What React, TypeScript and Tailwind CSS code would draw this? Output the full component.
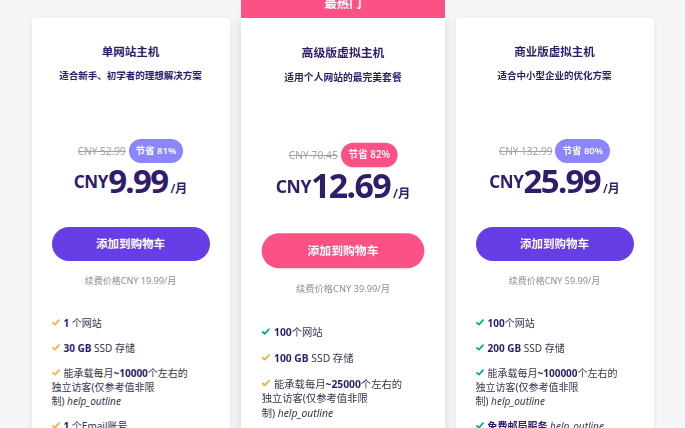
import React from "react";

type Feature = { green?: boolean; body: React.ReactNode };

const plans: {
  id: string;
  title: string;
  subtitle: string;
  oldPrice: string;
  save: string;
  price: string;
  renew: string;
  featured?: boolean;
  features: Feature[];
}[] = [
  {
    id: "single",
    title: "单网站主机",
    subtitle: "适合新手、初学者的理想解决方案",
    oldPrice: "CNY 52.99",
    save: "节省 81%",
    price: "9.99",
    renew: "续费价格CNY 19.99/月",
    features: [
      { body: <><b className="font-bold text-[#2f1c6a]">1</b> 个网站</> },
      { body: <><b className="font-bold text-[#2f1c6a]">30 GB</b> SSD 存储</> },
      {
        body: (
          <>
            能承载每月<b className="font-bold text-[#2f1c6a]">~10000</b>个左右的<br />
            独立访客(仅参考值非限<br />
            制) <i className="italic">help_outline</i>
          </>
        ),
      },
      { body: <><b className="font-bold text-[#2f1c6a]">1</b> 个Email账号</> },
      { body: <>免费SSL证书</> },
    ],
  },
  {
    id: "premium",
    title: "高级版虚拟主机",
    subtitle: "适用个人网站的最完美套餐",
    oldPrice: "CNY 70.45",
    save: "节省 82%",
    price: "12.69",
    renew: "续费价格CNY 39.99/月",
    featured: true,
    features: [
      { green: true, body: <><b className="font-bold text-[#2f1c6a]">100</b>个网站</> },
      { body: <><b className="font-bold text-[#2f1c6a]">100 GB</b> SSD 存储</> },
      {
        body: (
          <>
            能承载每月<b className="font-bold text-[#2f1c6a]">~25000</b>个左右的<br />
            独立访客(仅参考值非限<br />
            制) <i className="italic">help_outline</i>
          </>
        ),
      },
      { green: true, body: <><b className="font-bold text-[#2f1c6a]">免费邮局服务</b> <i className="italic">help_outline</i></> },
    ],
  },
  {
    id: "business",
    title: "商业版虚拟主机",
    subtitle: "适合中小型企业的优化方案",
    oldPrice: "CNY 132.99",
    save: "节省 80%",
    price: "25.99",
    renew: "续费价格CNY 59.99/月",
    features: [
      { green: true, body: <><b className="font-bold text-[#2f1c6a]">100</b>个网站</> },
      { green: true, body: <><b className="font-bold text-[#2f1c6a]">200 GB</b> SSD 存储</> },
      {
        green: true,
        body: (
          <>
            能承载每月<b className="font-bold text-[#2f1c6a]">~100000</b>个左右的<br />
            独立访客(仅参考值非限<br />
            制) <i className="italic">help_outline</i>
          </>
        ),
      },
      { green: true, body: <><b className="font-bold text-[#2f1c6a]">免费邮局服务</b> <i className="italic">help_outline</i></> },
    ],
  },
];

function Check({ green }: { green?: boolean }) {
  return (
    <svg
      width="8"
      height="7"
      viewBox="0 0 8 7"
      className="inline-block mr-[4px] align-[1px]"
      fill="none"
      stroke={green ? "#00b090" : "#f5b13b"}
      strokeWidth="1.8"
      strokeLinecap="round"
      strokeLinejoin="round"
    >
      <polyline points="1,3.8 3,5.6 7,1.2" />
    </svg>
  );
}

export default function App() {
  return (
    <div
      className="min-h-screen bg-[#f5f5f8] overflow-hidden"
      style={{ fontFamily: '"Noto Sans", "Noto Sans CJK SC", sans-serif' }}
    >
      <div className="flex justify-center gap-[14px] pt-[18px]">
        {plans.map((p) => {
          const accent = p.featured ? "bg-[#fc5185]" : "bg-[#673de6]";
          const badge = p.featured ? "bg-[#fc5185]" : "bg-[#8c85ff]";
          return (
            <div
              key={p.id}
              className={`relative w-[198px] shrink-0 bg-white rounded-[4px] px-5 pt-6 pb-10 ${
                p.featured
                  ? "scale-[1.03] origin-top shadow-[0_2px_10px_rgba(0,0,0,0.12)] rounded-t-none"
                  : "shadow-[0_1px_5px_rgba(0,0,0,0.08)]"
              }`}
            >
              {p.featured && (
                <div className="absolute inset-x-0 bottom-full h-[29px] bg-[#fc5185] rounded-t-[4px] flex items-center justify-center text-white text-[12px] font-bold">
                  最热门
                </div>
              )}

              {/* Heading */}
              <h2 className="text-center text-[11.5px] leading-5 font-bold text-[#2f1c6a]">{p.title}</h2>
              <p className="mt-1 text-center text-[9.5px] leading-5 font-semibold text-[#2f1c6a]">{p.subtitle}</p>

              {/* Price */}
              <div className="mt-[53px] h-6 flex items-center justify-center gap-[3px]">
                <span className="text-[10px] text-[#a0a0ae] line-through">{p.oldPrice}</span>
                <span className={`h-6 px-[7px] rounded-full ${badge} text-white text-[9.5px] font-semibold flex items-center`}>
                  {p.save}
                </span>
              </div>
              <div className="h-9 flex justify-center items-baseline text-[#2f1c6a] font-bold">
                <span className="self-start mt-[10px] text-[17px] leading-none tracking-[-0.02em]">CNY</span>
                <span className="text-[33px] leading-[36px] tracking-[-0.05em]">{p.price}</span>
                <span className="ml-[3px] text-[12px] font-semibold leading-none">/月</span>
              </div>

              {/* Button */}
              <button className={`mt-7 w-full h-[34px] rounded-full ${accent} text-white text-[11.5px] font-bold`}>
                添加到购物车
              </button>
              <p className="mt-3 text-center text-[9px] leading-4 text-[#8c8c99]">{p.renew}</p>

              {/* Features */}
              <ul className="mt-[27px] flex flex-col gap-[11px] text-[10px] leading-[14px] text-[#36344d]">
                {p.features.map((f, i) => (
                  <li key={i}>
                    <Check green={f.green} />
                    {f.body}
                  </li>
                ))}
              </ul>
            </div>
          );
        })}
      </div>
    </div>
  );
}
